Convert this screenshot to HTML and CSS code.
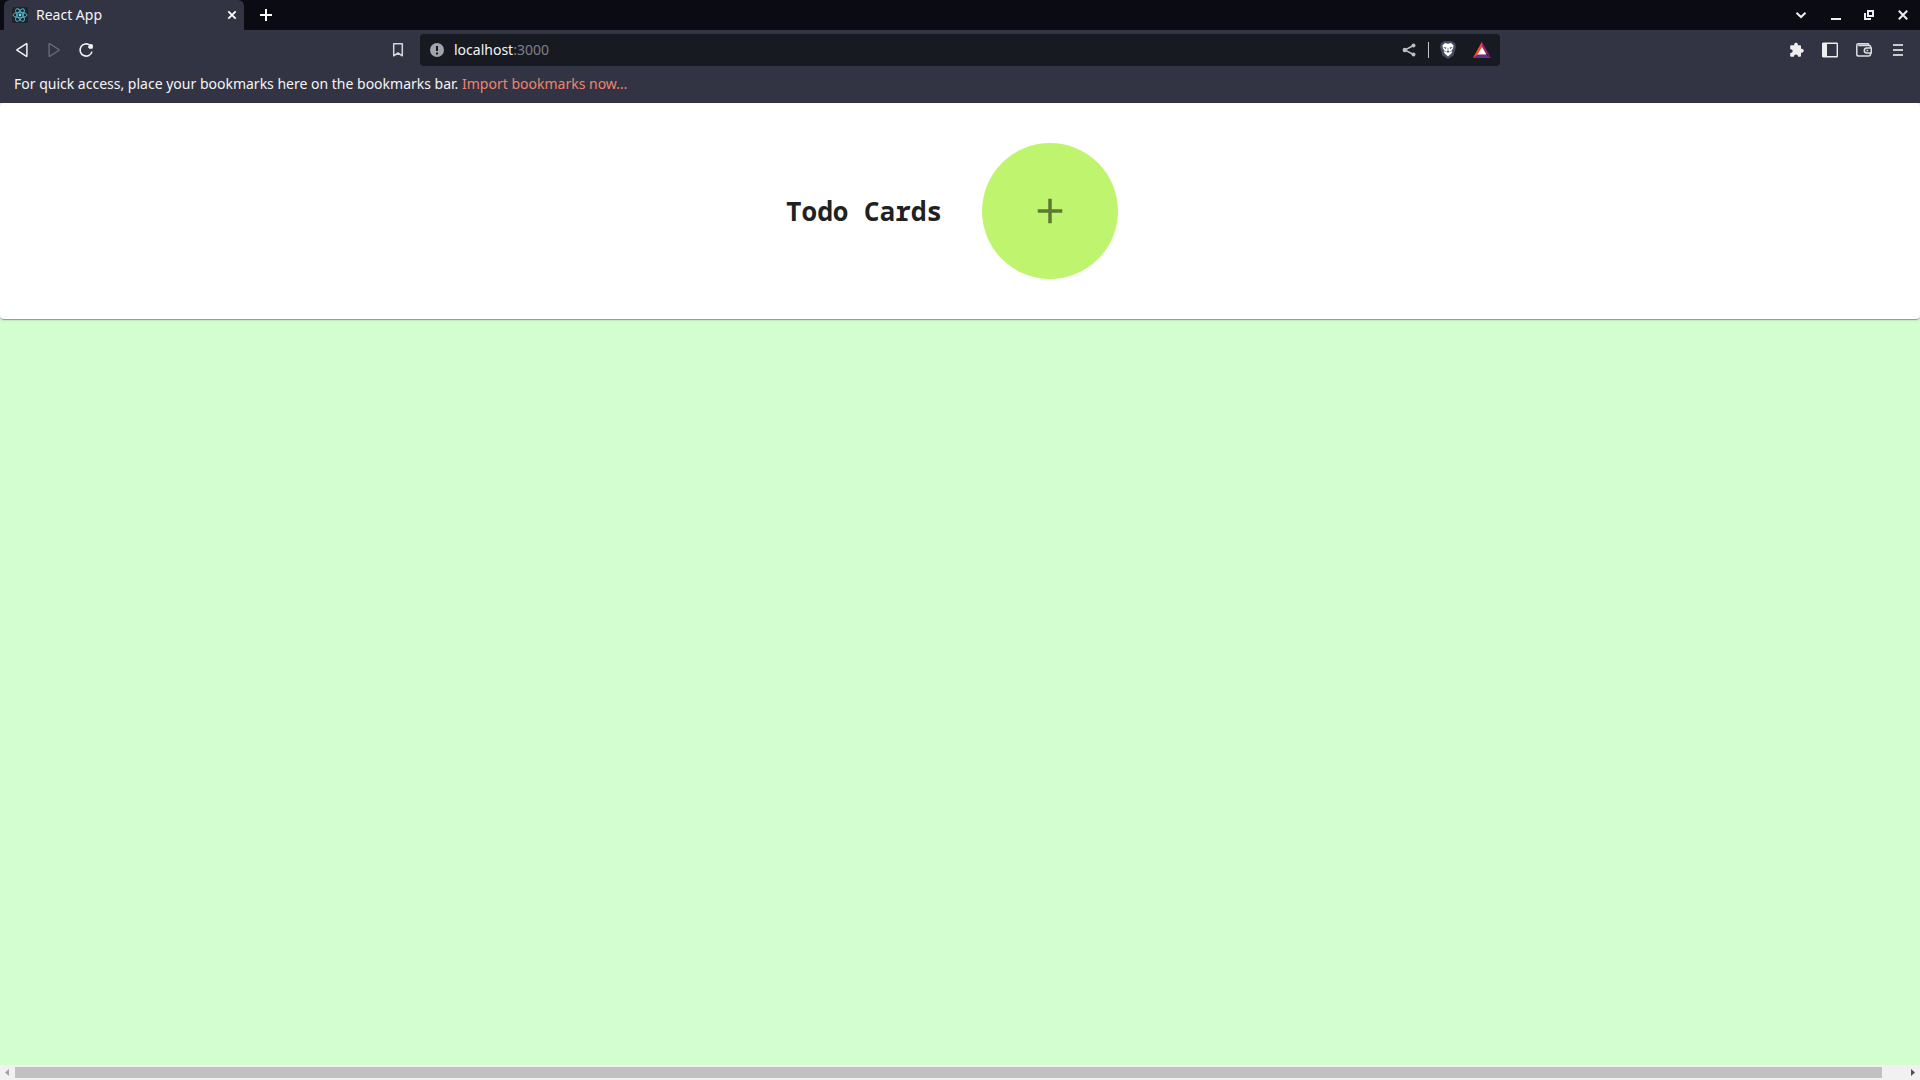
FILE: index.html
```html
<!DOCTYPE html>
<html lang="en">
<head>
<meta charset="utf-8">
<title>React App</title>
<link rel="stylesheet" href="styles.css">
</head>
<body>
<header class="browser">
  <div class="tab-strip">
    <div class="tab">
      <svg class="favicon" width="16" height="16" viewBox="0 0 16 16"><rect width="16" height="16" rx="1" fill="#222427"/><g fill="none" stroke="#55bcd6" stroke-width=".9"><ellipse cx="8" cy="8" rx="7" ry="2.7"/><ellipse cx="8" cy="8" rx="7" ry="2.7" transform="rotate(60 8 8)"/><ellipse cx="8" cy="8" rx="7" ry="2.7" transform="rotate(120 8 8)"/></g><circle cx="8" cy="8" r="1.4" fill="#61dafb"/></svg>
      <span class="tab-title">React App</span>
      <button class="tab-close" aria-label="Close tab"><svg width="10" height="10" viewBox="0 0 10 10"><path d="M1.3 1.3l7.4 7.4M8.7 1.3L1.3 8.7" stroke="#fff" stroke-width="1.8"/></svg></button>
    </div>
    <button class="new-tab" aria-label="New tab"><svg width="12" height="12" viewBox="0 0 12 12"><path d="M6 0v12M0 6h12" stroke="#fff" stroke-width="2"/></svg></button>
    <div class="window-controls">
      <button aria-label="Search tabs"><svg width="12" height="12" viewBox="0 0 12 12"><path d="M1.5 3.7L6 8l4.500-4.300" fill="none" stroke="#eee" stroke-width="2"/></svg></button>
      <button aria-label="Minimize"><svg width="12" height="12" viewBox="0 0 12 12"><path d="M2 10h10" stroke="#eee" stroke-width="2"/></svg></button>
      <button aria-label="Restore"><svg width="12" height="12" viewBox="0 0 12 12"><path d="M5 2h5v5H5zM2 4v6h6" fill="none" stroke="#eee" stroke-width="2"/></svg></button>
      <button aria-label="Close"><svg width="12" height="12" viewBox="0 0 12 12"><path d="M1.800 1.800l8.400 8.400M10.200 1.800L1.800 10.200" stroke="#eee" stroke-width="2"/></svg></button>
    </div>
  </div>
  <div class="toolbar">
    <div class="nav-tools">
      <button aria-label="Back"><svg width="16" height="16" viewBox="0 0 16 16"><path d="M12.900 2.200v11.600q0 .9-.8.4L3.200 8.500q-.7-.5 0-1l8.900-5.700q.8-.5.8.4z" fill="none" stroke="#f2f2f2" stroke-width="1.500"/></svg></button>
      <button aria-label="Forward" disabled><svg width="16" height="16" viewBox="0 0 16 16"><path d="M3.100 2.200v11.600q0 .9.8.4l8.900-5.700q.7-.5 0-1L3.900 1.800q-.8-.5-.8.4z" fill="none" stroke="#6c6e7b" stroke-width="1.300"/></svg></button>
      <button aria-label="Reload"><svg width="16" height="16" viewBox="0 0 16 16"><path d="M12 3.300A6.100 6.100 0 1 0 14 9.600" fill="none" stroke="#f2f2f2" stroke-width="1.600"/><path d="M14.300 2.800v3.400h-3.200l-.6-1.600 1.800-2z" fill="#f2f2f2" stroke="#f2f2f2" stroke-linejoin="round"/></svg></button>
      <button class="bookmark" aria-label="Bookmark this tab"><svg width="12" height="16" viewBox="0 0 12 16"><path d="M1.700 1.700h8.600v12.100L6 11l-4.300 2.800z" fill="none" stroke="#d5d6d8" stroke-width="1.500" stroke-linejoin="round"/></svg></button>
    </div>
    <div class="address">
      <button class="site-info" aria-label="View site information"><svg width="14" height="14" viewBox="0 0 14 14"><circle cx="7" cy="7" r="7" fill="#a0a4ad"/><path d="M7 3v5M7 9.500v2" stroke="#17191f" stroke-width="2"/></svg></button>
      <span class="url">localhost<span class="port">:3000</span></span>
      <button class="share" aria-label="Share"><svg width="14" height="14" viewBox="0 0 14 14"><path d="M11.500 2.500L2.800 7l8.700 4.500" fill="none" stroke="#bcbdbe" stroke-width="1.500"/><g fill="#bcbdbe"><circle cx="11.500" cy="2.500" r="2"/><circle cx="2.800" cy="7" r="2.200"/><circle cx="11.500" cy="11.500" r="2"/></g></svg></button>
      <span class="divider"></span>
      <button aria-label="Brave Shields"><svg width="16" height="18" viewBox="0 0 16 18"><path d="M4 0h8l1.500 1.500L15 2l1 4-2.500 8.500L8 18l-5.500-3.500L0 6l1-4 1.500-.5z" fill="#494a5c"/><path d="M5 2l3 .7L11 2l2.600 2.500-.6 3-1.500 2.300.5 2L8 15.500l-4-3.700.5-2L3 7.500l-.6-3z" fill="#fff"/><path d="M3.500 6l3 .5-.8 1.700zM12.500 6l-3 .5.8 1.700zM6.500 10.500L8 9.800l1.500.7L8 12z" fill="#555668"/><path d="M8 7v3M5 10l1.500 1M11 10l-1.500 1" stroke="#74758a" stroke-width=".8"/></svg></button>
      <button aria-label="Brave Rewards"><svg width="18" height="16" viewBox="0 0 18 16"><path d="M9 0L0 16l9-9z" fill="#ff4724"/><path d="M9 0v7l9 9z" fill="#9e1f63"/><path d="M0 16l5-3.500h8l5 3.500z" fill="#662d91"/><path d="M9 0L0 16l5-3.500L9 5z" fill="#ff4724"/><path d="M9 5l4.500 7.500h-9z" fill="#fff"/></svg></button>
    </div>
    <div class="side-tools">
      <button aria-label="Extensions"><svg width="16" height="16" viewBox="0 0 16 16"><path d="M3 3.200h3.200C5.600 0 10.400 0 9.900 3.200H12q1 0 1 1v2.700c3.600-.5 3.600 4.300 0 3.800v3.100q0 1-1 1H10.200c-.4-3.200-4-3.200-4.400 0H3.200q-1 0-1-1v-2.900c3.300.4 3.300-4 0-3.600V4.200q0-1 .8-1z" fill="#eee"/></svg></button>
      <button aria-label="Sidebar"><svg width="16" height="16" viewBox="0 0 16 16"><rect x=".7" y="1.200" width="14.600" height="13.600" rx=".6" fill="none" stroke="#eee" stroke-width="1.400"/><path d="M0 1h5v14H0z" fill="#eee"/></svg></button>
      <button aria-label="Wallet"><svg width="16" height="16" viewBox="0 0 16 16"><path d="M14.500 6V4.200q0-.8-1-.8H2.200M13 3.300q0-1.500-1.300-1.500H2.200Q.8 1.800.8 3.200v9q0 1.900 1.900 1.900h9.800q2 0 2-2V11" fill="none" stroke="#dededf" stroke-width="1.500"/><path d="M15.300 6h-4.500a2.500 2.500 0 0 0 0 5h4.500zM10.500 8.500h1.700" fill="none" stroke="#dededf" stroke-width="1.500"/></svg></button>
      <button aria-label="Menu"><svg width="10" height="14" viewBox="0 0 10 14"><path d="M0 2h10M0 7h10M0 12h10" stroke="#c9cacd" stroke-width="1.800"/></svg></button>
    </div>
  </div>
  <div class="bookmarks-bar">For quick access, place your bookmarks here on the bookmarks bar. <a href="#">Import bookmarks now…</a></div>
</header>
<main class="page">
  <section class="paper">
    <h1>Todo Cards</h1>
    <button class="add" aria-label="Add card"><svg width="42" height="42" viewBox="0 0 24 24"><path d="M19 13h-6v6h-2v-6H5v-2h6V5h2v6h6v2z"/></svg></button>
  </section>
</main>
<footer class="scrollbar">
  <button aria-label="Scroll left"><svg width="15" height="15" viewBox="0 0 15 15"><path d="M9 4v7L5 7.500z" fill="#a3a3a3"/></svg></button>
  <div class="track"><div class="thumb"></div></div>
  <button aria-label="Scroll right"><svg width="15" height="15" viewBox="0 0 15 15"><path d="M6 4v7l4-3.500z" fill="#505050"/></svg></button>
</footer>
</body>
</html>
```
FILE: styles.css
```css
* {
  box-sizing: border-box;
}

body {
  margin: 0;
  min-height: 100vh;
  display: flex;
  flex-direction: column;
  background: #d3ffd0;
  font: 14px/20px "Noto Sans", sans-serif;
}

button {
  display: flex;
  flex: none;
  align-items: center;
  justify-content: center;
  padding: 0;
  border: 0;
  background: none;
}

svg {
  display: block;
  flex: none;
}

.browser {
  background: #323443;
  color: #f4f4f6;
}

.tab-strip {
  display: flex;
  height: 30px;
  padding-left: 4px;
  background: #0b0b14;
}

.tab {
  display: flex;
  align-items: center;
  gap: 8px;
  width: 240px;
  padding: 0 7px 0 8px;
  border-radius: 6px 6px 0 0;
  background: #323443;
}

.tab-title {
  flex: 1;
}

.tab-close {
  width: 10px;
  height: 16px;
}

.new-tab {
  width: 44px;
}

.window-controls {
  display: flex;
  margin-left: auto;
}

.window-controls button {
  width: 34px;
}

.toolbar {
  display: grid;
  grid-template-columns: 1fr minmax(0, 1080px) 1fr;
  padding: 4px 0;
}

.nav-tools,
.side-tools,
.address {
  display: flex;
  align-items: center;
}

.nav-tools {
  padding: 0 6px;
}

.nav-tools button {
  width: 32px;
  height: 32px;
}

.nav-tools .bookmark {
  margin-left: auto;
}

.address {
  height: 32px;
  padding-right: 1px;
  border-radius: 4px;
  background: #181a21;
}

.site-info {
  width: 34px;
}

.url {
  flex: 1;
}

.port {
  color: #7d8088;
}

.address button:not(.site-info) {
  width: 34px;
  height: 32px;
}

.divider {
  width: 1px;
  height: 16px;
  margin: 0 2px;
  background: #c4c5c7;
}

.side-tools {
  justify-content: flex-end;
  padding-right: 5px;
}

.side-tools button {
  width: 34px;
  height: 32px;
}

.bookmarks-bar {
  padding: 4px 14px 9px;
}

.bookmarks-bar a {
  color: #f0836f;
  text-decoration: none;
}

.page {
  flex: 1;
}

.paper {
  display: flex;
  align-items: center;
  justify-content: center;
  gap: 40px;
  padding: 40px 16px 40px 0;
  border-radius: 4px;
  background: #fff;
  box-shadow: 0 2px 1px -1px rgba(0, 0, 0, .2), 0 1px 1px rgba(0, 0, 0, .14), 0 1px 3px rgba(0, 0, 0, .12);
}

h1 {
  margin: 0;
  color: #212121;
  font: bold 26px/36px "Noto Sans Mono", "Noto Sans Mono CJK SC", "DejaVu Sans Mono", monospace;
}

.add {
  width: 136px;
  height: 136px;
  border-radius: 50%;
  background: #bff56e;
}

.add svg {
  fill: #5e7836;
}

.scrollbar {
  display: flex;
  height: 15px;
  background: #f1f1f1;
}

.track {
  flex: 1;
  padding: 2px 0;
}

.thumb {
  width: 98.8%;
  height: 11px;
  background: #c1c1c1;
}
```
